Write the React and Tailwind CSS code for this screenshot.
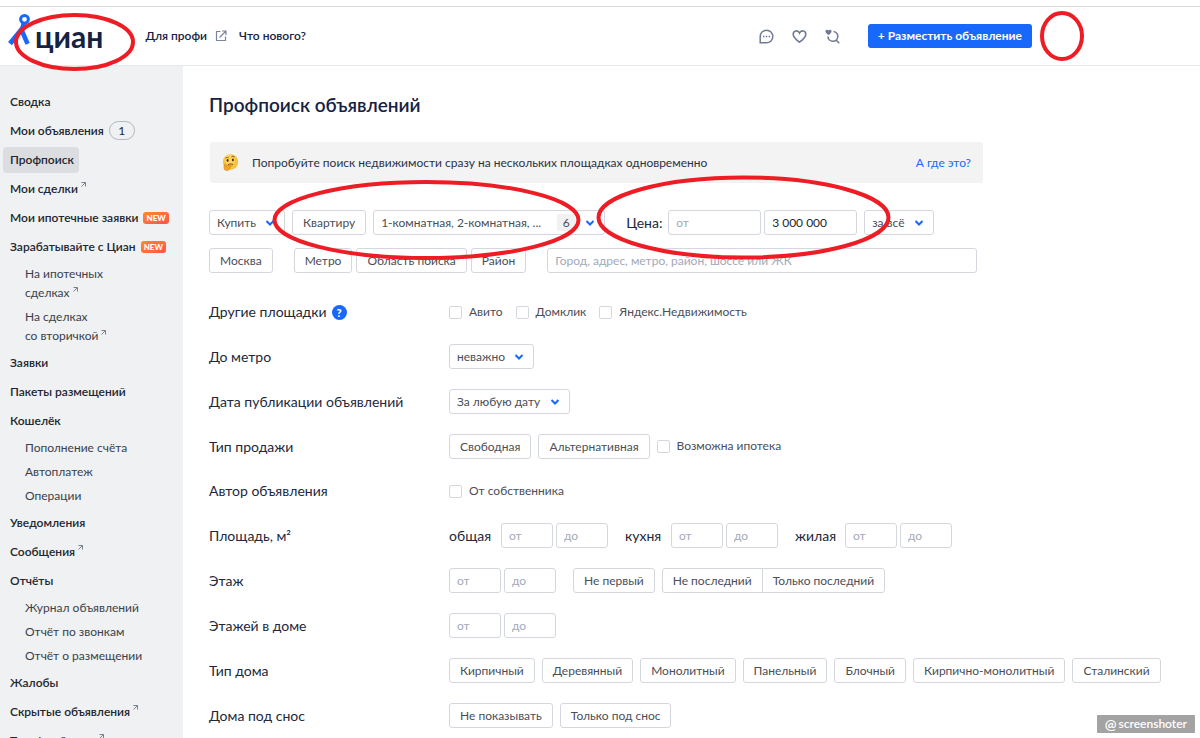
import clsx from 'clsx'

const NAV = [
  { label: 'Сводка' },
  { label: 'Мои объявления', count: 1 },
  { label: 'Профпоиск', active: true },
  { label: 'Мои сделки', external: true },
  { label: 'Мои ипотечные заявки', isNew: true },
  {
    label: 'Зарабатывайте с Циан',
    isNew: true,
    children: [
      { lines: ['На ипотечных', 'сделках'], external: true },
      { lines: ['На сделках', 'со вторичкой'], external: true },
    ],
  },
  { label: 'Заявки' },
  { label: 'Пакеты размещений' },
  {
    label: 'Кошелёк',
    children: [{ lines: ['Пополнение счёта'] }, { lines: ['Автоплатеж'] }, { lines: ['Операции'] }],
  },
  { label: 'Уведомления' },
  { label: 'Сообщения', external: true },
  {
    label: 'Отчёты',
    children: [
      { lines: ['Журнал объявлений'] },
      { lines: ['Отчёт по звонкам'] },
      { lines: ['Отчёт о размещении'] },
    ],
  },
  { label: 'Жалобы' },
  { label: 'Скрытые объявления', external: true },
  { label: 'Тарифный план', external: true },
]

const HOUSE_TYPES = [
  'Кирпичный',
  'Деревянный',
  'Монолитный',
  'Панельный',
  'Блочный',
  'Кирпично-монолитный',
  'Сталинский',
]

function Logo() {
  return (
    <a href="#" aria-label="Циан" className="flex items-center">
      <svg width="24" height="46" viewBox="8 13 24 46" fill="none" stroke="#1868fb">
        <circle cx="24.5" cy="19.3" r="3.9" strokeWidth="3" />
        <path d="M10 43.6 24 26.500" strokeWidth="5" />
        <path d="M23.6 23.5 22 31l5.600 12.800" strokeWidth="4.600" />
      </svg>
      <span className="pl-[3px] text-[30px] leading-none font-bold text-[#152242]">циан</span>
    </a>
  )
}

function ArrowOut() {
  return (
    <svg width="5" height="5" viewBox="0 0 5 5" fill="none" stroke="#7a8291" className="mb-2 ml-[3px] inline-block">
      <path d="M.5.5h4v4M4.5.5l-4 4" />
    </svg>
  )
}

function Chevron() {
  return (
    <svg width="10" height="10" viewBox="0 0 10 10" fill="none" stroke="#1868fb" strokeWidth="2">
      <path d="m1.5 3 3.5 3.5L8.5 3" />
    </svg>
  )
}

function ThinkingFace() {
  return (
    <svg width="17" height="17" viewBox="0 0 17 17">
      <circle cx="8.5" cy="8" r="7.7" fill="#f9c23c" />
      <circle cx="8" cy="6" r="5" fill="#ffd45e" />
      <ellipse cx="5.6" cy="6.4" rx="1" ry="1.3" fill="#4a2b12" />
      <ellipse cx="10.9" cy="5.9" rx="1" ry="1.3" fill="#4a2b12" />
      <path d="M3.6 4.2c.9-.9 2-.9 3-.4M9.4 2.9c1-.9 2.3-.8 3.3.2" fill="none" stroke="#7b4a14" strokeWidth=".9" />
      <path d="M6 10.6c1.6-.8 3.6-.8 5-.2" fill="none" stroke="#6b3c10" strokeWidth=".9" />
      <path
        d="M2.4 10.6c.5-1 1.4-.9 1.6 0l.3 1.6 4.6-1.4c1-.2 1.3.9.4 1.3l-2 .8c1.1.2 1.2 1.4.4 2-1 1.3-2.7 1.9-4.2 1.4-1.7-.6-1.9-3.4-1.1-5.7z"
        fill="#f4a62a"
        stroke="#c9781a"
        strokeWidth=".5"
      />
    </svg>
  )
}

function NewBadge() {
  return (
    <span className="ml-[5px] rounded-[3px] bg-gradient-to-br from-[#ff8a1c] to-[#ff4f4a] px-[3px] text-[8px] leading-[12px] font-black text-white">
      NEW
    </span>
  )
}

function Header() {
  return (
    <header className="mt-[6px] flex h-[60px] shrink-0 items-center border-y border-t-[#d9d9d9] border-b-[#e8e9ec] pl-2">
      <Logo />
      <nav className="ml-[42px] flex items-center text-[12px] font-semibold text-[#152242]">
        <a href="#" className="flex items-center">
          Для профи
          <svg width="12" height="12" viewBox="0 0 12 12" fill="none" stroke="#7a83a0" className="ml-2">
            <path d="M5.5 1.5h-4v9h9v-4M7 1h4v4M11 1 4.5 7.5" strokeWidth="1.2" />
          </svg>
        </a>
        <a href="#" className="ml-3">
          Что нового?
        </a>
      </nav>
      <div className="ml-auto flex items-center gap-[18px] pr-[168px] text-[#6f7a94]">
        <button aria-label="Сообщения">
          <svg width="15" height="15" viewBox="0 0 15 15" fill="none" stroke="currentColor" strokeWidth="1.5">
            <path d="M1.2 13.8V7.5a6.3 6.3 0 1 1 6.3 6.3z" />
            <path d="M4 7.5h1.5M6.8 7.5h1.5M9.6 7.5h1.5" />
          </svg>
        </button>
        <button aria-label="Избранное">
          <svg width="15" height="15" viewBox="0 0 15 15" fill="none" stroke="currentColor" strokeWidth="1.6">
            <path d="M7.5 13.2C4.5 11 1.2 8.3 1.2 5.2 1.2 1.4 6 .7 7.5 4c1.5-3.3 6.3-2.6 6.3 1.2 0 3.1-3.3 5.8-6.3 8z" />
          </svg>
        </button>
        <button aria-label="Сохранённые поиски">
          <svg width="15" height="15" viewBox="0 0 15 15" fill="none" stroke="currentColor" strokeWidth="1.6">
            <path d="M3 7.4a4.9 4.9 0 1 0 5.6-4.9M11.3 11.3l2.9 2.9" />
            <path
              d="M3.5 6C2 4.9.4 3.8.4 2.2.4.5 2.8.1 3.5 1.6 4.2.1 6.6.5 6.6 2.2c0 1.6-1.6 2.7-3.1 3.8z"
              fill="currentColor"
              stroke="none"
            />
          </svg>
        </button>
        <button className="ml-[10px] h-6 rounded-[3px] bg-[#1868fb] px-[10px] text-[12px] font-bold text-white">
          + Разместить объявление
        </button>
      </div>
    </header>
  )
}

function NavItem({ item }) {
  return (
    <li>
      <div className="flex h-[29px] items-center">
        <a
          href="#"
          className={clsx(
            'flex h-[26px] items-center rounded pr-[5px] pl-[7px] text-[12px] font-semibold whitespace-nowrap text-[#22262e]',
            item.active && 'bg-[#dcdde0]',
          )}
        >
          {item.label}
          {item.external && <ArrowOut />}
          {item.isNew && <NewBadge />}
          {item.count && (
            <span className="ml-[5px] w-[26px] rounded-full border border-[#b4b7bd] text-center leading-[17px] font-normal">
              {item.count}
            </span>
          )}
        </a>
      </div>
      {item.children && (
        <ul className="pb-px pl-[22px] text-[12px] leading-[19px] text-[#3a3f4a]">
          {item.children.map((child) => (
            <li key={child.lines[0]} className={clsx('flex items-center', child.lines.length > 1 ? 'h-[43px]' : 'h-6')}>
              <a href="#">
                {child.lines.map((line, i) => (
                  <span key={line} className="block">
                    {line}
                    {child.external && i === child.lines.length - 1 && <ArrowOut />}
                  </span>
                ))}
              </a>
            </li>
          ))}
        </ul>
      )}
    </li>
  )
}

function Sidebar() {
  return (
    <aside className="w-[183px] shrink-0 overflow-hidden bg-[#eff1f3] pt-[21px] pl-[3px]">
      <ul>
        {NAV.map((item) => (
          <NavItem key={item.label} item={item} />
        ))}
      </ul>
    </aside>
  )
}

function Chip({ children, className }) {
  return (
    <button
      className={clsx(
        'h-[25px] rounded-[3px] border border-[#d5d7df] bg-white px-[10px] text-[12px] whitespace-nowrap text-[#4a4e57]',
        className,
      )}
    >
      {children}
    </button>
  )
}

function Dropdown({ label, value, className }) {
  return (
    <div className={clsx('relative', className)}>
      <select
        aria-label={label}
        className="block h-[25px] w-full appearance-none rounded-[3px] border border-[#d5d7df] bg-white pl-[7px] text-[12px] text-[#4a4e57]"
      >
        <option>{value}</option>
      </select>
      <span className="pointer-events-none absolute inset-y-0 right-[10px] flex items-center">
        <Chevron />
      </span>
    </div>
  )
}

function Field({ label, className, ...props }) {
  return (
    <input
      type="text"
      aria-label={label}
      className={clsx(
        'h-[25px] rounded-[3px] border border-[#d5d7df] bg-white px-[7px] text-[12px] text-[#22262e] placeholder:text-[#a3a9b8]',
        className,
      )}
      {...props}
    />
  )
}

function Range({ label }) {
  return (
    <div className="flex gap-[3px]">
      <Field label={`${label} от`} placeholder="от" className="w-[52px]" />
      <Field label={`${label} до`} placeholder="до" className="w-[52px]" />
    </div>
  )
}

function Check({ children }) {
  return (
    <label className="flex h-6 items-center gap-[7px] text-[12px] text-[#4a4e57]">
      <input type="checkbox" className="size-[13px] appearance-none rounded-[2px] border border-[#d5d7df] bg-white" />
      {children}
    </label>
  )
}

function Row({ title, children }) {
  return (
    <div className="flex items-center py-[10px]">
      <div className="flex w-[240px] shrink-0 items-center text-[14px] leading-5 text-[#22283a]">{title}</div>
      {children}
    </div>
  )
}

// Hand-drawn marks that lie over the page.
function Marks() {
  return (
    <svg
      width="1200"
      height="280"
      fill="none"
      stroke="#ee1c24"
      strokeWidth="4"
      className="pointer-events-none absolute top-0 left-0"
    >
      <ellipse cx="74.5" cy="42" rx="58.5" ry="27" />
      <ellipse cx="1062" cy="36" rx="20" ry="23" />
      <ellipse cx="426.5" cy="220" rx="152" ry="38" />
      <ellipse cx="743.5" cy="217.5" rx="145" ry="40" />
    </svg>
  )
}

export default function App() {
  return (
    <div className="relative flex h-screen flex-col overflow-hidden bg-white font-['Lato','Open_Sans',sans-serif]">
      <Header />
      <div className="flex min-h-0 flex-1">
        <Sidebar />
        <main className="min-w-0 flex-1 overflow-hidden pt-[25px] pl-[26px]">
          <h1 className="text-[19px] leading-7 font-semibold text-[#152242]">Профпоиск объявлений</h1>

          <div className="mt-[23px] ml-px flex h-[41px] max-w-[773px] items-center rounded-[3px] bg-[#f3f3f3] px-3 text-[12px]">
            <ThinkingFace />
            <span className="ml-[13px] text-[#2b3245]">
              Попробуйте поиск недвижимости сразу на нескольких площадках одновременно
            </span>
            <a href="#" className="ml-auto text-[#1868fb]">
              А где это?
            </a>
          </div>

          <div className="mt-[27px] flex items-center">
            <Dropdown label="Сделка" value="Купить" className="w-[76px]" />
            <Chip className="ml-[7px]">Квартиру</Chip>
            <button
              aria-haspopup="listbox"
              className="ml-[7px] flex h-[25px] w-[232px] items-center rounded-[3px] border border-[#d5d7df] pr-[9px] pl-[7px] text-[12px] text-[#4a4e57]"
            >
              1-комнатная, 2-комнатная, ...
              <span className="ml-auto w-[18px] rounded-[2px] bg-[#eff1f3] text-center leading-[17px]">6</span>
              <span className="ml-[10px]">
                <Chevron />
              </span>
            </button>
            <span className="ml-[21px] w-[42px] text-[14px] text-[#22283a]">Цена:</span>
            <Field label="Цена от" placeholder="от" className="w-[93px]" />
            <Field label="Цена до" defaultValue="3 000 000" className="ml-[3px] w-[93px]" />
            <Dropdown label="Цена за" value="за всё" className="ml-[7px] w-[70px]" />
          </div>

          <div className="mt-[13px] flex items-center">
            <Chip>Москва</Chip>
            <Chip className="ml-[21px]">Метро</Chip>
            <Chip className="ml-1">Область поиска</Chip>
            <Chip className="ml-1">Район</Chip>
            <Field
              label="Адрес"
              placeholder="Город, адрес, метро, район, шоссе или ЖК"
              className="ml-[21px] w-[430px]"
            />
          </div>

          <div className="mt-[17px]">
            <Row
              title={
                <>
                  Другие площадки
                  <button
                    aria-label="Подсказка"
                    className="ml-[5px] size-[15px] rounded-full bg-[#1868fb] text-[11px] leading-[15px] font-black text-white"
                  >
                    ?
                  </button>
                </>
              }
            >
              <div className="flex gap-[13px]">
                <Check>Авито</Check>
                <Check>Домклик</Check>
                <Check>Яндекс.Недвижимость</Check>
              </div>
            </Row>
            <Row title="До метро">
              <Dropdown label="До метро" value="неважно" className="w-[85px]" />
            </Row>
            <Row title="Дата публикации объявлений">
              <Dropdown label="Дата публикации" value="За любую дату" className="w-[121px]" />
            </Row>
            <Row title="Тип продажи">
              <div className="flex gap-[7px]">
                <Chip>Свободная</Chip>
                <Chip>Альтернативная</Chip>
                <Check>Возможна ипотека</Check>
              </div>
            </Row>
            <Row title="Автор объявления">
              <Check>От собственника</Check>
            </Row>
            <Row title="Площадь, м²">
              <div className="flex items-center text-[14px] text-[#22283a]">
                <span className="w-[52px]">общая</span>
                <Range label="Общая площадь" />
                <span className="ml-[17px] w-[46px]">кухня</span>
                <Range label="Площадь кухни" />
                <span className="ml-[17px] w-[50px]">жилая</span>
                <Range label="Жилая площадь" />
              </div>
            </Row>
            <Row title="Этаж">
              <Range label="Этаж" />
              <Chip className="ml-[17px]">Не первый</Chip>
              <Chip className="ml-[7px] rounded-r-none">Не последний</Chip>
              <Chip className="-ml-px rounded-l-none">Только последний</Chip>
            </Row>
            <Row title="Этажей в доме">
              <Range label="Этажей в доме" />
            </Row>
            <Row title="Тип дома">
              <div className="flex gap-[7px]">
                {HOUSE_TYPES.map((type) => (
                  <Chip key={type}>{type}</Chip>
                ))}
              </div>
            </Row>
            <Row title="Дома под снос">
              <div className="flex gap-[7px]">
                <Chip>Не показывать</Chip>
                <Chip>Только под снос</Chip>
              </div>
            </Row>
          </div>
        </main>
      </div>

      <div className="absolute right-[5px] bottom-[5px] flex h-[18px] items-center gap-[2px] rounded-[1px] bg-[#a3a3a3] px-2 text-[12px] font-semibold text-white">
        <span className="text-[14px] leading-none">@</span>screenshoter
      </div>
      <Marks />
    </div>
  )
}
